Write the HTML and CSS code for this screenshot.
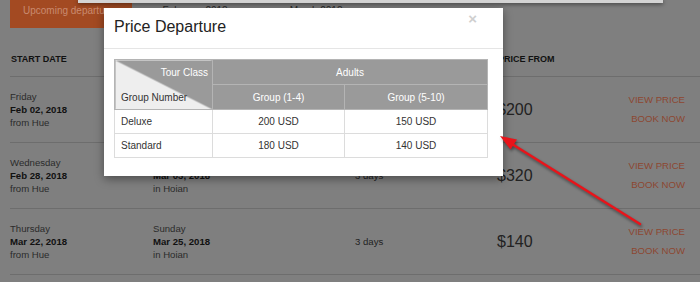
FILE: index.html
```html
<!DOCTYPE html>
<html lang="en">
<head>
    <meta charset="UTF-8">
    <meta name="viewport" content="width=device-width, initial-scale=1.0">
    <title>Departures</title>
    <link rel="stylesheet" href="styles.css">
</head>
<body>
    <div class="page">
        <div class="tabs">
            <span class="tab active">Upcoming departures</span>
            <span class="tab">February 2018</span>
            <span class="tab">March 2018</span>
        </div>

        <div class="departures">
            <div class="dep-row dep-head">
                <div>Start date</div>
                <div>End date</div>
                <div>Duration</div>
                <div>Price from</div>
                <div></div>
            </div>

            <div class="dep-row">
                <div class="date"><span>Friday</span><b>Feb 02, 2018</b><span>from Hue</span></div>
                <div class="date"></div>
                <div class="duration"></div>
                <div class="price">$200</div>
                <div class="actions"><a href="#">View price</a><a href="#">Book now</a></div>
            </div>

            <div class="dep-row">
                <div class="date"><span>Wednesday</span><b>Feb 28, 2018</b><span>from Hue</span></div>
                <div class="date"><span>Saturday</span><b>Mar 03, 2018</b><span>in Hoian</span></div>
                <div class="duration">3 days</div>
                <div class="price">$320</div>
                <div class="actions"><a href="#">View price</a><a href="#">Book now</a></div>
            </div>

            <div class="dep-row">
                <div class="date"><span>Thursday</span><b>Mar 22, 2018</b><span>from Hue</span></div>
                <div class="date"><span>Sunday</span><b>Mar 25, 2018</b><span>in Hoian</span></div>
                <div class="duration">3 days</div>
                <div class="price">$140</div>
                <div class="actions"><a href="#">View price</a><a href="#">Book now</a></div>
            </div>
        </div>
    </div>

    <div class="topbar"></div>

    <div class="modal">
        <div class="modal-header">
            <h4>Price Departure</h4>
            <span class="close">&times;</span>
        </div>
        <div class="modal-body">
            <table class="price-table">
                <colgroup>
                    <col class="col-class">
                    <col class="col-small">
                    <col>
                </colgroup>
                <tr>
                    <th rowspan="2" class="diag">
                        <div class="diag-inner">
                            <span class="diag-top">Tour Class</span>
                            <span class="diag-bottom">Group Number</span>
                        </div>
                    </th>
                    <th colspan="2">Adults</th>
                </tr>
                <tr>
                    <th>Group (1-4)</th>
                    <th>Group (5-10)</th>
                </tr>
                <tr>
                    <td>Deluxe</td>
                    <td class="num">200 USD</td>
                    <td class="num">150 USD</td>
                </tr>
                <tr>
                    <td>Standard</td>
                    <td class="num">180 USD</td>
                    <td class="num">140 USD</td>
                </tr>
            </table>
        </div>
    </div>

    <svg class="arrow" width="700" height="282" viewBox="0 0 700 282">
        <line x1="640" y1="224" x2="512" y2="144" stroke="#e8141a" stroke-width="2.6" stroke-linecap="round"/>
        <polygon points="500,136 517,139.5 510.5,149.5" fill="#e8141a"/>
    </svg>
</body>
</html>
```

FILE: styles.css
```css
body {
    margin: 0;
    background-color: #7f7f7f;
    font-family: "Liberation Sans", Arial, sans-serif;
    font-size: 9.6px;
    color: #2b2b2b;
    overflow: hidden;
}
.page {
    padding-left: 10px;
}
.tabs {
    display: flex;
    height: 28px;
}
.tab {
    padding: 4px 31px 0;
    line-height: 13px;
    font-size: 10px;
    color: #2a2a2a;
}
.tab.active {
    background-color: #a34a22;
    color: #c98b70;
    padding: 4px 13px 0;
}
.dep-row {
    display: grid;
    grid-template-columns: 143px 202px 142px 1fr auto;
    padding: 13px 15px 13px 0;
    border-bottom: 1px solid #6d6d6d;
    line-height: 13px;
}
.dep-head {
    padding: 25px 15px 10px 1px;
    font-size: 9px;
    font-weight: bold;
    text-transform: uppercase;
    color: #111;
}
.date {
    display: flex;
    flex-direction: column;
}
.date b {
    color: #111;
}
.duration {
    align-self: center;
    color: #222;
}
.price {
    align-self: center;
    font-size: 16px;
    color: #222;
}
.actions {
    display: flex;
    flex-direction: column;
    align-items: flex-end;
    gap: 6px;
    align-self: center;
    margin-top: -1px;
}
.actions a {
    color: #8d4731;
    text-decoration: none;
    text-transform: uppercase;
    font-size: 9.6px;
}
.topbar {
    position: absolute;
    top: 0;
    left: 78px;
    width: 585px;
    height: 3px;
    background-color: #d4d4d4;
    box-shadow: 0 1px 4px rgba(0, 0, 0, 0.6);
}
.modal {
    position: absolute;
    top: 8px;
    left: 104px;
    width: 399px;
    background-color: white;
    box-shadow: 0 3px 9px rgba(0, 0, 0, 0.4);
}
.modal-header {
    display: flex;
    justify-content: space-between;
    padding: 9px 26px 11px 10px;
    border-bottom: 1px solid #e5e5e5;
}
.modal-header h4 {
    margin: 0;
    font-size: 16px;
    line-height: 20px;
    font-weight: normal;
    color: #222;
}
.close {
    margin-top: -6px;
    font-size: 15px;
    line-height: 16px;
    font-weight: bold;
    color: #cfcfcf;
}
.modal-body {
    padding: 10px 15px 18px 10px;
}
.price-table {
    width: 374px;
    table-layout: fixed;
    border-collapse: collapse;
    font-size: 10px;
}
.col-class {
    width: 98px;
}
.col-small {
    width: 132px;
}
.price-table th,
.price-table td {
    line-height: 13px;
    padding: 0 6px;
}
.price-table th {
    height: 24px;
    background-color: #9a9a9a;
    color: white;
    font-weight: normal;
    border: 1px solid #b4b4b4;
}
.price-table td {
    height: 23px;
    border: 1px solid #dcdcdc;
    color: #333;
}
.price-table td.num {
    text-align: center;
}
.price-table th.diag {
    padding: 0;
    background: linear-gradient(to top right, #eeeeee calc(50% - 0.5px), #9a9a9a calc(50% + 0.5px));
}
.diag-inner {
    display: flex;
    flex-direction: column;
    justify-content: space-between;
    height: 48px;
    padding: 5px 4px 5px 6px;
    box-sizing: border-box;
}
.diag-top {
    text-align: right;
    color: white;
}
.diag-bottom {
    text-align: left;
    color: #333;
}
.arrow {
    position: absolute;
    top: 0;
    left: 0;
    pointer-events: none;
    filter: drop-shadow(1px 2px 1.5px rgba(0, 0, 0, 0.45));
}
```
